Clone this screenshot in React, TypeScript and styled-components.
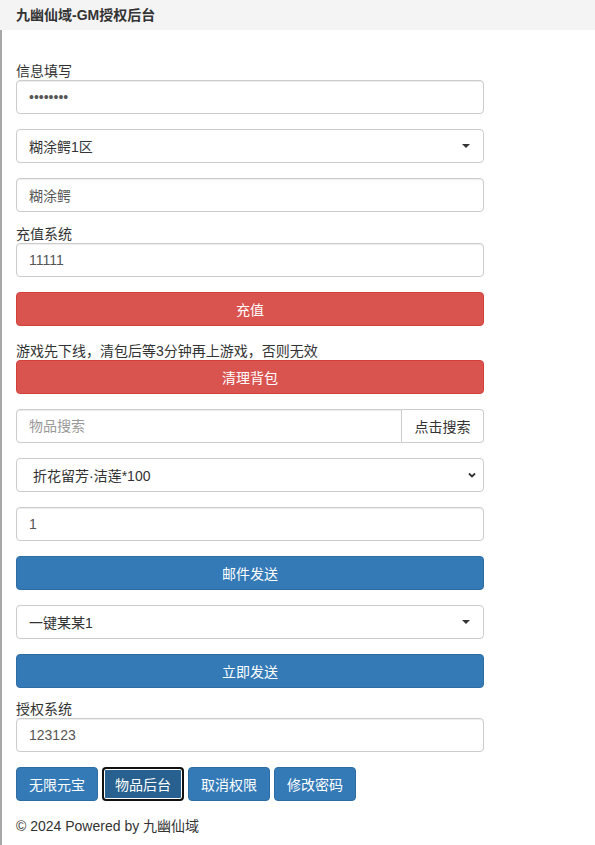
import React from "react";
import styled, { createGlobalStyle } from "styled-components";

const GlobalStyle = createGlobalStyle`
  html, body {
    margin: 0;
    padding: 0;
    background: #fff;
  }
  body {
    font-family: "Liberation Sans", "Noto Sans CJK SC", sans-serif;
    font-size: 14px;
    color: #333;
  }
  * {
    box-sizing: border-box;
  }
`;

const Header = styled.div`
  height: 30px;
  background: #f4f4f4;
  padding-left: 16px;
  font-weight: bold;
  font-size: 14px;
  line-height: 30px;
  color: #333;
`;

const Content = styled.div`
  border-left: 2px solid #a8a8a8;
  padding: 32px 0 10px 14px;
  min-height: 815px;
`;

const Form = styled.div`
  width: 468px;
  display: flex;
  flex-direction: column;
`;

const Label = styled.div<{ $top?: number }>`
  height: 18px;
  line-height: 18px;
  margin-top: ${(p) => p.$top ?? 0}px;
  color: #333;
`;

const Note = styled(Label)``;

const Field = styled.input<{ $top?: number }>`
  display: block;
  width: 100%;
  height: 34px;
  margin-top: ${(p) => p.$top ?? 0}px;
  padding: 0 12px;
  border: 1px solid #ccc;
  border-radius: 4px;
  background: #fff;
  font-family: inherit;
  font-size: 14px;
  color: #555;
  box-shadow: inset 0 1px 1px rgba(0, 0, 0, 0.075);
  outline: none;
  &::placeholder {
    color: #999;
  }
`;

const Dropdown = styled.div<{ $top?: number }>`
  height: 34px;
  margin-top: ${(p) => p.$top ?? 0}px;
  padding: 0 12px;
  border: 1px solid #ccc;
  border-radius: 4px;
  background: #fff;
  display: flex;
  align-items: center;
  justify-content: space-between;
  color: #333;
`;

const Caret = styled.span`
  width: 0;
  height: 0;
  margin-right: 1px;
  border-left: 4px solid transparent;
  border-right: 4px solid transparent;
  border-top: 4px solid #333;
`;

const NativeSelect = styled(Dropdown)`
  padding: 0 5px 0 16px;
`;

const Button = styled.button<{ $tone: "danger" | "primary"; $top?: number }>`
  display: block;
  width: 100%;
  height: 34px;
  margin-top: ${(p) => p.$top ?? 0}px;
  border: 1px solid ${(p) => (p.$tone === "danger" ? "#d43f3a" : "#2e6da4")};
  border-radius: 4px;
  background: ${(p) => (p.$tone === "danger" ? "#d9534f" : "#337ab7")};
  color: #fff;
  font-family: inherit;
  font-size: 14px;
  cursor: pointer;
`;

const InputGroup = styled.div<{ $top?: number }>`
  display: flex;
  height: 34px;
  margin-top: ${(p) => p.$top ?? 0}px;
`;

const GroupField = styled(Field)`
  flex: 1;
  border-radius: 4px 0 0 4px;
`;

const GroupButton = styled.button`
  width: 82px;
  height: 34px;
  border: 1px solid #ccc;
  border-left: none;
  border-radius: 0 4px 4px 0;
  background: #fff;
  color: #333;
  font-family: inherit;
  font-size: 14px;
`;

const ActionRow = styled.div`
  display: flex;
  gap: 4px;
  margin-top: 15px;
`;

const ActionButton = styled.button<{ $focused?: boolean }>`
  width: 82px;
  height: 34px;
  border-radius: 4px;
  border: ${(p) => (p.$focused ? "2px solid #111" : "1px solid #2e6da4")};
  background: ${(p) => (p.$focused ? "#286090" : "#337ab7")};
  box-shadow: ${(p) => (p.$focused ? "inset 0 0 0 1px #fff" : "none")};
  color: #fff;
  font-family: inherit;
  font-size: 14px;
  padding: 0;
`;

const Footer = styled.div`
  margin-top: 16px;
  height: 18px;
  line-height: 18px;
  color: #333;
`;

const Chevron = () => (
  <svg width="12" height="12" viewBox="0 0 12 12">
    <path d="M3 4.5 L6 7.5 L9 4.5" fill="none" stroke="#333" strokeWidth="1.8" />
  </svg>
);

export default function App() {
  return (
    <>
      <GlobalStyle />
      <Header>九幽仙域-GM授权后台</Header>
      <Content>
        <Form>
          <Label>信息填写</Label>
          <Field type="password" defaultValue="12345678" readOnly />
          <Dropdown $top={15}>
            <span>糊涂鳄1区</span>
            <Caret />
          </Dropdown>
          <Field $top={15} defaultValue="糊涂鳄" readOnly />

          <Label $top={13}>充值系统</Label>
          <Field defaultValue="11111" readOnly />
          <Button $tone="danger" $top={15}>充值</Button>

          <Note $top={16}>游戏先下线，清包后等3分钟再上游戏，否则无效</Note>
          <Button $tone="danger">清理背包</Button>

          <InputGroup $top={15}>
            <GroupField placeholder="物品搜索" readOnly />
            <GroupButton>点击搜索</GroupButton>
          </InputGroup>
          <NativeSelect $top={15}>
            <span>折花留芳·洁莲*100</span>
            <Chevron />
          </NativeSelect>
          <Field $top={15} defaultValue="1" readOnly />
          <Button $tone="primary" $top={15}>邮件发送</Button>

          <Dropdown $top={15}>
            <span>一键某某1</span>
            <Caret />
          </Dropdown>
          <Button $tone="primary" $top={15}>立即发送</Button>

          <Label $top={12}>授权系统</Label>
          <Field defaultValue="123123" readOnly />

          <ActionRow>
            <ActionButton>无限元宝</ActionButton>
            <ActionButton $focused>物品后台</ActionButton>
            <ActionButton>取消权限</ActionButton>
            <ActionButton>修改密码</ActionButton>
          </ActionRow>

          <Footer>© 2024 Powered by 九幽仙域</Footer>
        </Form>
      </Content>
    </>
  );
}
